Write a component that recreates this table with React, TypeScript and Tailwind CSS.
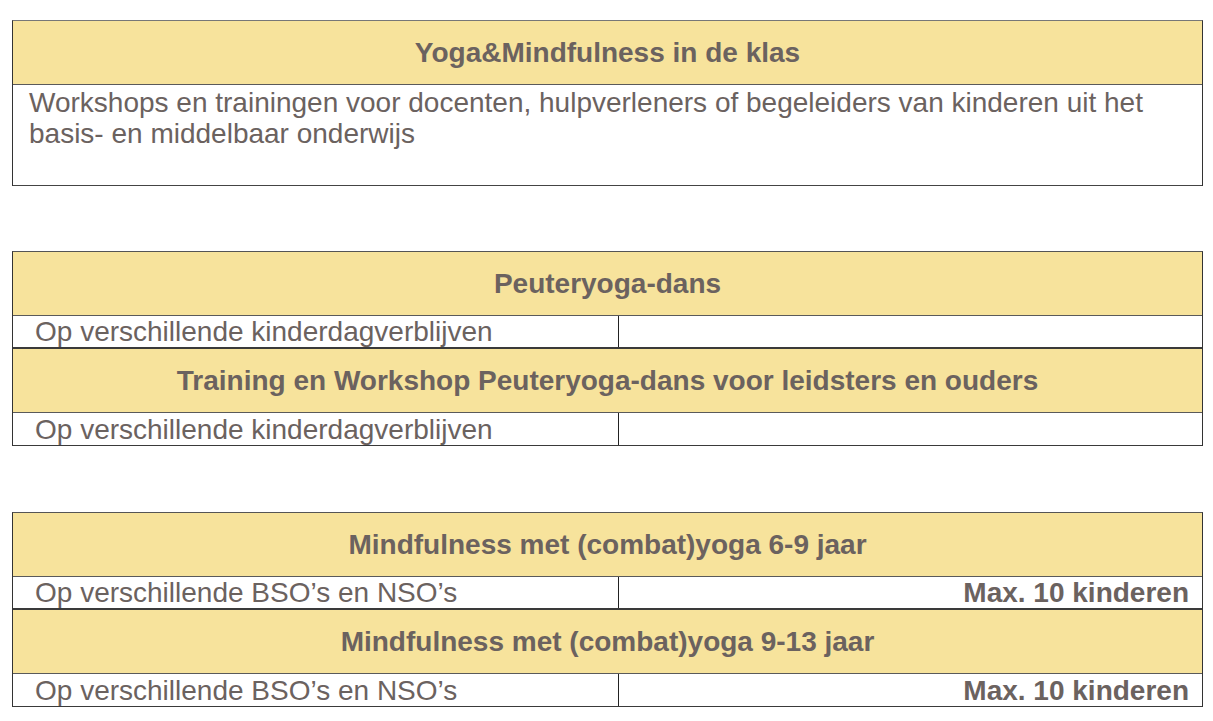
const ink = "text-[#6b625f]";

function Header({ children }: { children: React.ReactNode }) {
  return (
    <div className={`flex h-[64px] items-center justify-center border-b border-[#5a5a5a] bg-[#f7e39c] text-[28px] font-bold leading-none ${ink}`}>
      {children}
    </div>
  );
}

function Row({ left, right, last }: { left: string; right?: string; last?: boolean }) {
  return (
    <div
      className={`grid h-[33px] grid-cols-[606px_1fr] bg-white text-[28px] leading-none ${ink} ${
        last ? "border-b border-[#3a3a3a]" : "border-b-2 border-[#3a3a3a]"
      }`}
    >
      <div className="flex items-center border-r border-[#222] pl-[22px] pt-[1px]">{left}</div>
      <div className="flex items-center justify-end pr-[13px] pt-[1px] font-bold">{right}</div>
    </div>
  );
}

export default function App() {
  return (
    <div className="min-h-[721px] w-[1213px] bg-white pt-[20px] font-['Liberation_Sans',Arial,sans-serif]">
      <div className="ml-[12px] w-[1191px] border-t border-l border-r border-[#777] border-l-[#333] border-r-[#333]">
        <Header>Yoga&amp;Mindfulness in de klas</Header>
        <div className={`h-[101px] border-b border-[#444] bg-white pl-[16px] pt-[2px] text-[28px] leading-[31px] ${ink}`}>
          Workshops en trainingen voor docenten, hulpverleners of begeleiders van kinderen uit het
          <br />
          basis- en middelbaar onderwijs
        </div>
      </div>

      <div className="ml-[12px] mt-[65px] w-[1191px] border-t border-l border-r border-[#555] border-l-[#333] border-r-[#333]">
        <Header>Peuteryoga-dans</Header>
        <Row left="Op verschillende kinderdagverblijven" />
        <Header>Training en Workshop Peuteryoga-dans voor leidsters en ouders</Header>
        <Row left="Op verschillende kinderdagverblijven" last />
      </div>

      <div className="ml-[12px] mt-[66px] w-[1191px] border-t border-l border-r border-[#555] border-l-[#333] border-r-[#333]">
        <Header>Mindfulness met (combat)yoga 6-9 jaar</Header>
        <Row left="Op verschillende BSO’s en NSO’s" right="Max. 10 kinderen" />
        <Header>Mindfulness met (combat)yoga 9-13 jaar</Header>
        <Row left="Op verschillende BSO’s en NSO’s" right="Max. 10 kinderen" last />
      </div>
    </div>
  );
}
